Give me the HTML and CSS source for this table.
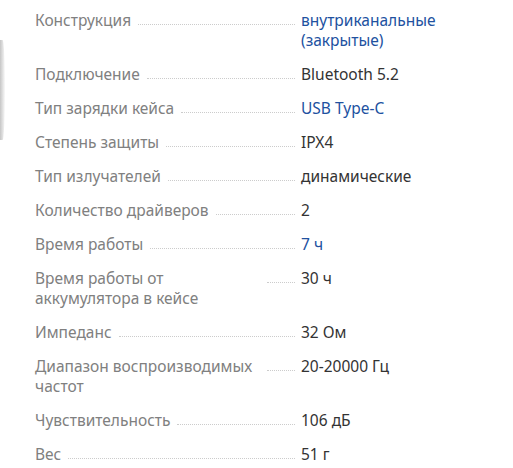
FILE: index.html
```html
<!DOCTYPE html>
<html lang="ru">
<head>
<meta charset="utf-8">
<link rel="stylesheet" href="styles.css">
</head>
<body>
<div class="edge"></div>
<dl class="specs">
  <div class="row"><dt><span class="label">Конструкция</span><span class="dots"></span></dt><dd class="link">внутриканальные (закрытые)</dd></div>
  <div class="row"><dt><span class="label">Подключение</span><span class="dots"></span></dt><dd>Bluetooth 5.2</dd></div>
  <div class="row"><dt><span class="label">Тип зарядки кейса</span><span class="dots"></span></dt><dd class="link">USB Type-C</dd></div>
  <div class="row"><dt><span class="label">Степень защиты</span><span class="dots"></span></dt><dd>IPX4</dd></div>
  <div class="row"><dt><span class="label">Тип излучателей</span><span class="dots"></span></dt><dd>динамические</dd></div>
  <div class="row"><dt><span class="label">Количество драйверов</span><span class="dots"></span></dt><dd>2</dd></div>
  <div class="row"><dt><span class="label">Время работы</span><span class="dots"></span></dt><dd class="link">7 ч</dd></div>
  <div class="row"><dt><span class="label">Время работы от аккумулятора в кейсе</span><span class="dots"></span></dt><dd>30 ч</dd></div>
  <div class="row"><dt><span class="label">Импеданс</span><span class="dots"></span></dt><dd>32 Ом</dd></div>
  <div class="row"><dt><span class="label">Диапазон воспроизводимых частот</span><span class="dots"></span></dt><dd>20-20000 Гц</dd></div>
  <div class="row"><dt><span class="label">Чувствительность</span><span class="dots"></span></dt><dd>106 дБ</dd></div>
  <div class="row"><dt><span class="label">Вес</span><span class="dots"></span></dt><dd>51 г</dd></div>
</dl>
</body>
</html>
```
FILE: styles.css
```css
html, body {
  margin: 0;
  padding: 0;
  background: #fff;
}
body {
  font-family: "Noto Sans", "Open Sans", sans-serif;
  font-size: 15.5px;
  line-height: 20px;
  position: relative;
  width: 513px;
  height: 468px;
  overflow: hidden;
}
.edge {
  position: absolute;
  left: 0;
  top: 40px;
  width: 5px;
  height: 100px;
  background: linear-gradient(to right, rgba(150,150,150,0.55), rgba(200,200,200,0.1));
  border-radius: 0 50% 50% 0 / 0 50% 50% 0;
}
.specs {
  margin: 0;
  padding: 10px 0 0 35px;
  display: flex;
  flex-direction: column;
  gap: 14px;
}
.row {
  display: flex;
  align-items: flex-start;
}
dt {
  width: 260px;
  display: flex;
  color: #808080;
}
.label {
  max-width: 225px;
}
.dots {
  flex: 1;
  margin-left: 7px;
  border-bottom: 1px dotted #cccccc;
  height: 0;
  margin-top: 14px;
}
dd {
  margin: 0 0 0 6px;
  width: 180px;
  color: #333333;
}
dd.link {
  color: #21519f;
}
```
